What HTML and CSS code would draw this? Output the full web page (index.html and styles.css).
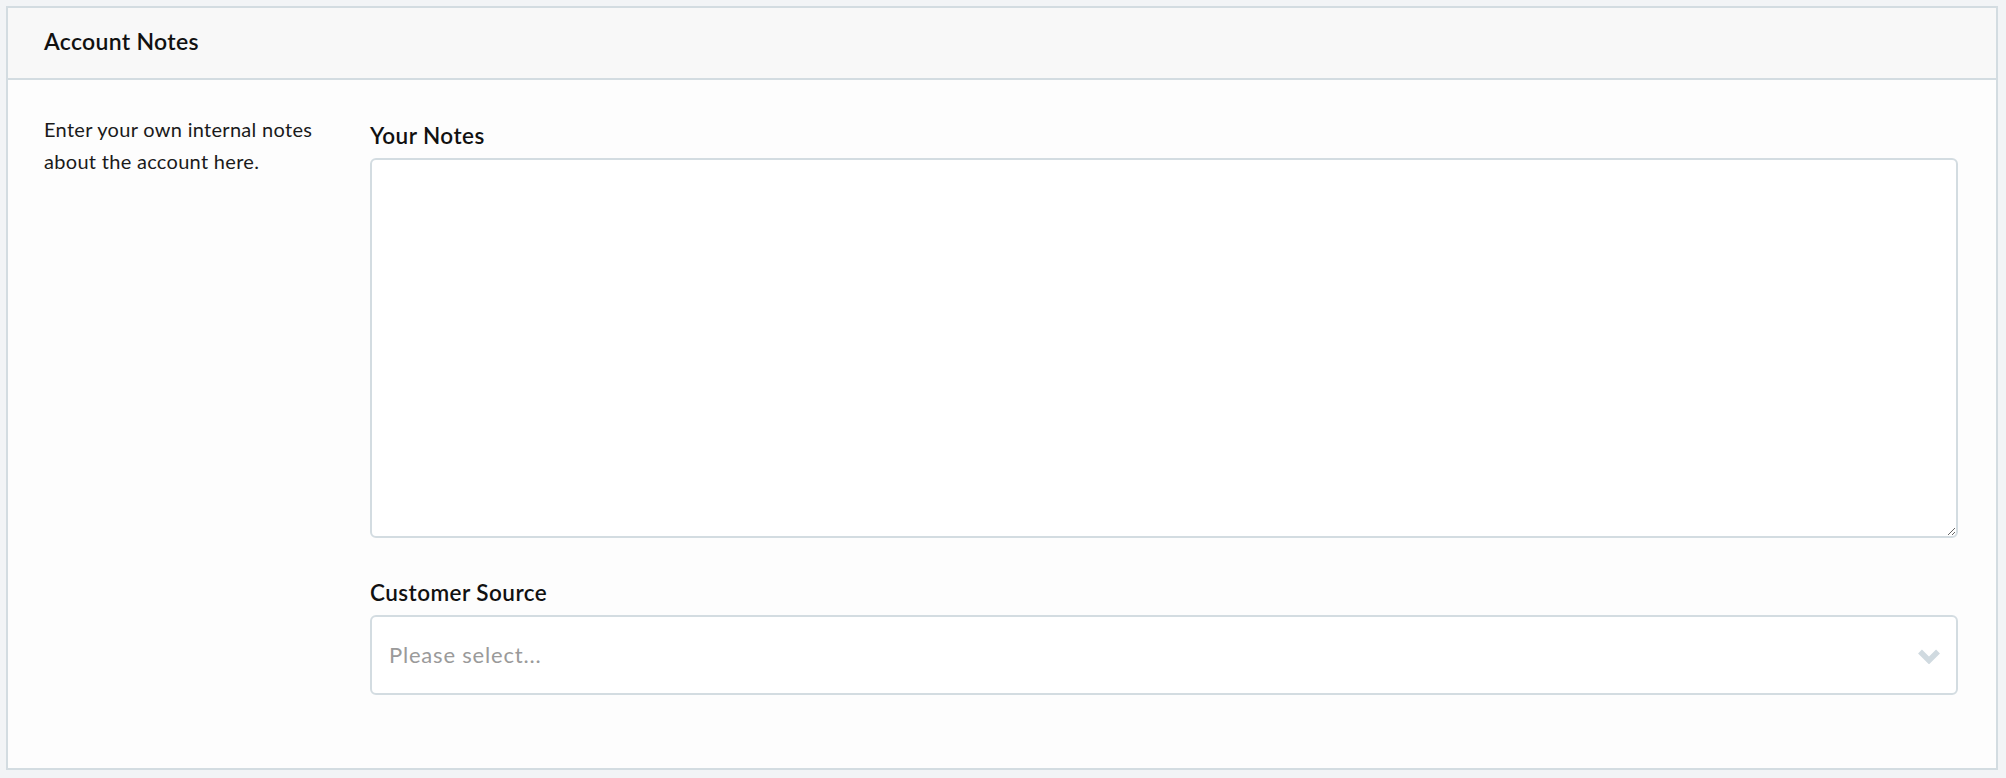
FILE: index.html
```html
<!DOCTYPE html>
<html lang="en">
<head>
    <meta charset="UTF-8">
    <meta name="viewport" content="width=device-width, initial-scale=1.0">
    <title>Account Notes</title>
    <link rel="stylesheet" href="styles.css">
</head>
<body>
    <div class="panel">
        <div class="panel-header">
            <h2>Account Notes</h2>
        </div>

        <!-- notes form -->
        <div class="panel-body">
            <p class="hint">Enter your own internal notes about the account here.</p>

            <div class="fields">
                <div class="form-group">
                    <label for="notes">Your Notes</label>
                    <textarea id="notes" name="notes"></textarea>
                </div>

                <div class="form-group">
                    <label for="source">Customer Source</label>
                    <div class="select-wrap">
                        <select id="source" name="source">
                            <option value="">Please select...</option>
                        </select>
                        <svg class="chevron" viewBox="0 0 24 16" width="24" height="16">
                            <path d="M3 3.5 L12 12.5 L21 3.5" fill="none" stroke="#d0dae0" stroke-width="5.5"/>
                        </svg>
                    </div>
                </div>
            </div>
        </div>
    </div>
</body>
</html>
```

FILE: styles.css
```css
* {
    box-sizing: border-box;
}
body {
    margin: 0;
    padding: 6px 8px 8px 6px;
    background: #f2f4f6;
    font-family: Lato, 'Open Sans', sans-serif;
    color: #111;
}
.panel {
    background: #fdfdfd;
    border: 2px solid #d3dce1;
    height: 764px;
}
.panel-header {
    height: 72px;
    display: flex;
    align-items: center;
    padding: 0 36px 4px;
    background: #f8f8f8;
    border-bottom: 2px solid #d3dce1;
}
.panel-header h2 {
    margin: 0;
    font-size: 23px;
    font-weight: 600;
    letter-spacing: 0.3px;
}
.panel-body {
    display: grid;
    grid-template-columns: 326px 1fr;
    padding: 33px 38px 0 36px;
}
.hint {
    margin: 0;
    font-size: 20px;
    line-height: 32px;
    letter-spacing: 0.3px;
    color: #1a1a1a;
    padding-right: 20px;
}
.form-group {
    margin-top: 8px;
}
.form-group + .form-group {
    margin-top: 40px;
}
label {
    display: block;
    font-size: 22.5px;
    font-weight: 600;
    line-height: 30px;
    letter-spacing: 0.45px;
    margin-bottom: 7px;
}
textarea {
    display: block;
    width: 100%;
    height: 380px;
    border: 2px solid #d3dce1;
    border-radius: 6px;
    background: #fff;
    resize: vertical;
    font: inherit;
}
.select-wrap {
    position: relative;
}
select {
    display: block;
    width: 100%;
    height: 80px;
    padding: 0 17px 2px;
    border: 2px solid #d3dce1;
    border-radius: 6px;
    background: #fff;
    font-family: inherit;
    font-size: 22px;
    letter-spacing: 0.8px;
    color: #9a9a9a;
    appearance: none;
    -webkit-appearance: none;
}
.chevron {
    position: absolute;
    right: 17px;
    top: 33px;
}
```
